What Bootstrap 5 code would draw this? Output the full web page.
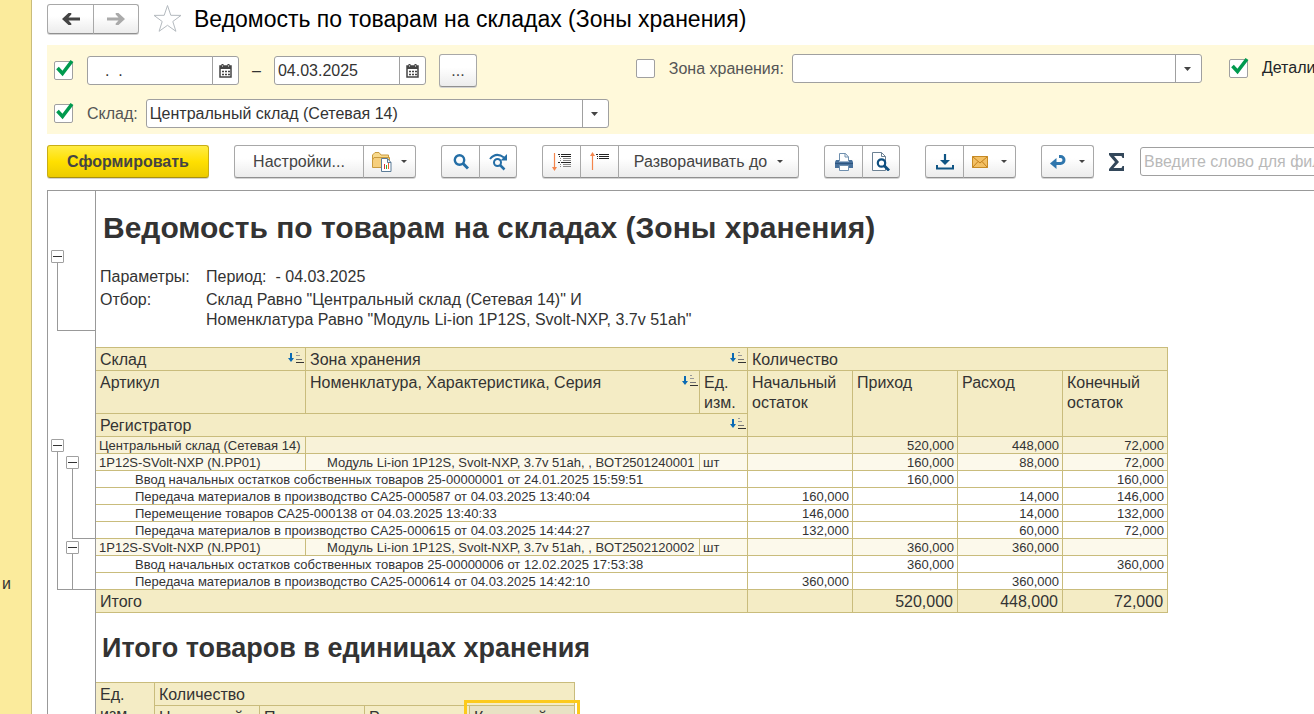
<!DOCTYPE html>
<html lang="ru">
<head>
<meta charset="utf-8">
<meta name="viewport" content="width=device-width, initial-scale=1">
<title>Ведомость по товарам на складах (Зоны хранения)</title>
<link href="https://cdn.jsdelivr.net/npm/bootstrap@5.3.0/dist/css/bootstrap.min.css" rel="stylesheet">
<style>
  :root { --rule: #c9bc7c; --head: #f4ecc5; --edge: #a0a0a0; }
  body { font-family: "Liberation Sans", Arial, sans-serif; font-size: 16px; line-height: 20px; color: #333; background: #fff; }
  .side-strip { width: 32px; background: #fbeb9c; border-right: 1px solid var(--rule); padding: 574px 0 0 2px; font-size: 16px; }
  .workspace { min-width: 0; padding-left: 15px; }
  .window-head { padding: 4px 0 7px; }
  .window-star { margin-left: 14px; }
  .window-title { font-size: 23px; line-height: 30px; color: #000; margin: 0 0 4px 12px; }

  .btn-tool { --bs-btn-padding-x: 0; --bs-btn-padding-y: 0; --bs-btn-font-size: 16px; --bs-btn-line-height: 20px; --bs-btn-border-radius: 3px;
    --bs-btn-color: #444; --bs-btn-border-color: #a8a8a8; --bs-btn-hover-border-color: #888;
    height: 33px; width: 39px; display: inline-flex; align-items: center; justify-content: center;
    background: linear-gradient(#fff 40%, #ececec); border-bottom-color: #909090; box-shadow: 0 1px 0 #d4d4d4; }
  .btn-end { width: 38px; }
  .btn-menu { width: 53px; gap: 9px; }
  .btn-wide { width: 130px; }
  .btn-expand { width: 181px; gap: 10px; }
  .btn-run { width: 162px; font-weight: 700; background: linear-gradient(#ffec45, #ffe000 50%, #eccb00); border-color: #c9ae14; border-bottom-color: #a89010; }
  .btn-history { width: 47px; height: 30px; }
  .btn-history:last-child { width: 46px; }
  .caret-mark { width: 0; border: 3px solid transparent; border-top-color: #444; border-bottom: 0; }

  .filter-panel { background: #fff9da; padding: 9px 0 6px 7px; gap: 27px; }
  .filter-panel label { color: #555; }
  .filter-line { gap: 14px; }
  .period { gap: 13px; }
  .labelled { gap: 8px; }
  .field { height: 29px; border: 1px solid var(--edge); border-radius: 3px; background-color: #fff; color: #333; font-size: 16px; line-height: 20px; padding: 0 3px; }
  .date-group input { width: 126px; border-radius: 3px 0 0 3px; }
  .date-group button { width: 27px; margin-left: -1px; padding: 0; border-radius: 0 3px 3px 0; display: flex; align-items: center; justify-content: center; }
  .combo { appearance: none; background-repeat: no-repeat; padding-right: 28px;
    background-image: url("data:image/svg+xml,%3Csvg xmlns='http://www.w3.org/2000/svg' width='26' height='27'%3E%3Cpath d='M.5 0v27' stroke='%23a0a0a0'/%3E%3Cpath d='M9 12h7l-3.500 4z' fill='%23444'/%3E%3C/svg%3E");
    background-position: right 0 top 0; }
  .combo-store { width: 463px; }
  .combo-zone { width: 410px; }
  .tick { appearance: none; position: relative; flex: none; width: 19px; height: 19px; margin: 0; border: 1px solid var(--edge); border-radius: 2px; background: #fff; }
  .tick:checked::before { content: ""; position: absolute; inset: -3px;
    background: url("data:image/svg+xml,%3Csvg xmlns='http://www.w3.org/2000/svg' viewBox='0 0 23 23'%3E%3Cpath d='M5.500 9l5 5.500L20 2' fill='none' stroke='%23009a4e' stroke-width='3.600'/%3E%3C/svg%3E"); }
  .search-field { width: 260px; }
  .search-field::placeholder { color: #b9b9b9; opacity: 1; }
  .tool-row { gap: 25px; padding: 11px 0 12px; }
  .sum-search { margin-left: -10px; }

  .report { border-top: 1px solid #999; border-left: 1px solid #999; }
  .gutter { width: 48px; flex: none; border-right: 1px solid #999; }
  .gutter-lead { height: 59px; }
  .gutter-gap { height: 108px; }
  .gutter-step { height: 2px; }
  .fold { display: block; width: 13px; height: 13px; padding: 0; border: 1px solid var(--edge); border-radius: 1px; background: linear-gradient(#333, #333) center / 9px 1px no-repeat #fff; }
  .fold-top { margin-left: 3px; }
  .fold-inner { margin-left: 8px; }
  .branch { border-left: 1px solid #999; border-bottom: 1px solid #999; margin-left: 9px; }
  .branch .branch { margin-left: 14px; }
  .branch .branch:last-child { border-bottom: 0; }
  .branch-head { height: 68px; }
  .branch-long { height: 70px; }
  .branch-short { height: 35px; }
  .report-title { font-size: 30px; line-height: 33px; font-weight: 700; margin: 0; padding: 20px 0 23px 7px; }
  .report-subtitle { font-size: 27px; line-height: 30px; font-weight: 700; margin: 0; padding: 20px 0 19px 6px; }
  .params { display: grid; grid-template-columns: 106px 1fr; row-gap: 3px; padding-left: 4px; margin: 0 0 17px; }
  .params dt, .params dd { margin: 0; font-weight: 400; }

  .ledger { border-collapse: separate; border-spacing: 0; table-layout: fixed; border-top: 1px solid var(--rule); }
  .ledger-main { width: 1072px; }
  .ledger-units { width: 479px; }
  .ledger th, .ledger td { border: solid var(--rule); border-width: 0 1px 1px 0; vertical-align: top; white-space: nowrap; }
  .ledger th { background: var(--head); font-weight: 400; padding: 2px 1px 0 4px; height: 23px; }
  .ledger th.two-line { height: 43px; white-space: normal; }
  .ledger td { font-size: 13px; line-height: 15px; padding: 1px 3px 0; height: 17px; }
  .ledger .num { text-align: right; }
  .ledger .group td { background: #f8f2d8; }
  .ledger .item td { background: #fcf9eb; }
  .ledger .doc { padding-left: 39px; }
  .ledger .goods { padding-left: 21px; }
  .ledger .total td { background: var(--head); font-size: 16px; line-height: 20px; padding: 2px 4px 0; height: 23px; }
  .sort-mark { float: right; margin-top: 2px; }
  .ledger th.picked { position: relative; background: #e8e2c4; }
  .picked::after { content: ""; position: absolute; inset: -6px; border: 3px solid #fcca1c; }
</style>
</head>
<body class="vh-100 overflow-hidden">
<svg class="d-none">
  <symbol id="sort" viewBox="0 0 16 12"><path d="M2 1h2v5h2L3 10 0 6h2z" fill="#0a6ab4"/><path d="M8 .5h2M8 3.500h4" stroke="#999"/><path d="M8 7.500h6" stroke="#777"/><path d="M8 10.500h8" stroke="#333"/></symbol>
  <symbol id="calendar" viewBox="0 0 13 14"><path d="M1 2h11v11H1z" fill="none" stroke="#444" stroke-width="1.500"/><path d="M1 2h11v3H1z" fill="#444"/><path d="M3.500 0v4M9.500 0v4" stroke="#444" stroke-width="2"/><path d="M3.500 1v2M9.500 1v2" stroke="#ccc" stroke-width=".7"/><path d="M3 7.500h2m1 0h2m1 0h2M3 10.500h2m1 0h2m1 0h2" stroke="#444" stroke-width="1.700"/></symbol>
</svg>
<div class="d-flex h-100">
  <aside class="side-strip flex-shrink-0">и</aside>
  <main class="workspace flex-grow-1 overflow-hidden d-flex flex-column">

    <header class="window-head d-flex align-items-start">
      <div class="btn-group">
        <button type="button" class="btn btn-tool btn-history" aria-label="Назад"><svg width="18" height="12" viewBox="0 0 18 12"><path d="M0 6 6.500 0h2.800v1.500L6.500 4.600H18v2.900H6.500l2.800 3V12H6.500z" fill="#444"/></svg></button>
        <button type="button" class="btn btn-tool btn-history" aria-label="Вперёд"><svg width="18" height="12" viewBox="0 0 18 12"><path d="M18 6 11.500 0H8.700v1.500l2.800 3.100H0v2.900h11.500l-2.800 3V12h2.800z" fill="#aaa"/></svg></button>
      </div>
      <svg class="window-star flex-shrink-0" width="29" height="29" viewBox="0 0 29 29"><path d="m14.500 1.500 3.300 9.800 10.200.1-8.200 6.100 3.100 9.800-8.400-6-8.400 6 3.100-9.800L1 11.400l10.200-.1z" fill="none" stroke="#b4babf"/></svg>
      <h1 class="window-title text-nowrap">Ведомость по товарам на складах (Зоны хранения)</h1>
    </header>

    <form class="filter-panel d-flex align-items-start flex-shrink-0">
      <div class="flex-shrink-0">
        <div class="filter-line d-flex align-items-center">
          <input class="tick" type="checkbox" checked aria-label="Период">
          <div class="period d-flex align-items-center">
            <div class="date-group d-flex">
              <input class="field ps-2" type="text" value="  .  ." aria-label="Начало периода">
              <button type="button" class="field" aria-label="Выбрать дату начала"><svg width="13" height="14"><use href="#calendar"/></svg></button>
            </div>
            <span>–</span>
            <div class="date-group d-flex">
              <input class="field" type="text" value="04.03.2025" aria-label="Конец периода">
              <button type="button" class="field" aria-label="Выбрать дату конца"><svg width="13" height="14"><use href="#calendar"/></svg></button>
            </div>
            <button type="button" class="btn btn-tool btn-end">...</button>
          </div>
        </div>
        <div class="filter-line d-flex align-items-center mt-2 pt-1">
          <input class="tick" type="checkbox" checked aria-label="Отбор по складу">
          <div class="labelled d-flex align-items-center">
            <label for="store">Склад:</label>
            <select class="field combo combo-store" id="store"><option>Центральный склад (Сетевая 14)</option></select>
          </div>
        </div>
      </div>
      <div class="filter-line d-flex align-items-center flex-shrink-0">
        <input class="tick" type="checkbox" aria-label="Отбор по зоне хранения">
        <div class="labelled d-flex align-items-center">
          <label for="zone">Зона хранения:</label>
          <select class="field combo combo-zone" id="zone"><option></option></select>
        </div>
      </div>
      <div class="filter-line d-flex align-items-center flex-shrink-0 pt-1">
        <input class="tick" type="checkbox" id="details" checked>
        <label class="text-body" for="details">Детализация</label>
      </div>
    </form>

    <div class="tool-row d-flex align-items-center flex-shrink-0" role="toolbar">
      <button type="button" class="btn btn-tool btn-run flex-shrink-0">Сформировать</button>
      <div class="btn-group flex-shrink-0">
        <button type="button" class="btn btn-tool btn-wide">Настройки...</button>
        <button type="button" class="btn btn-tool btn-menu" aria-label="Варианты отчёта"><svg width="20" height="20" viewBox="0 0 20 20"><path d="M.5 14.500V3L3 .5h4L9 3h7.500v3" fill="#f8d98b" stroke="#c99a3e"/><path d="M.5 15.500V8L2 5.500h15.500v3L9 15.500z" fill="#f6cf7d" stroke="#c99a3e"/><path d="M9.500 6.500h6l3.500 4v9H9.500z" fill="#fff" stroke="#5c7c98"/><path d="M15.500 7v3.500H19" fill="none" stroke="#5c7c98"/><path d="M12.500 17v-5" stroke="#d33"/><path d="M14.500 17v-4" stroke="#3a3"/><path d="M16.500 17v-6" stroke="#e63"/></svg><span class="caret-mark"></span></button>
      </div>
      <div class="btn-group flex-shrink-0">
        <button type="button" class="btn btn-tool" aria-label="Найти"><svg width="16" height="16" viewBox="0 0 16 16"><circle cx="6.500" cy="6" r="4.700" fill="none" stroke="#246ea6" stroke-width="2.400"/><path d="m10 9.500 5 5" stroke="#246ea6" stroke-width="3"/></svg></button>
        <button type="button" class="btn btn-tool btn-end" aria-label="Найти далее"><svg width="19" height="18" viewBox="0 0 19 18"><path d="M1 6Q7-1.500 15 4.500" fill="none" stroke="#246ea6" stroke-width="2"/><path d="M18 1v6.500h-6.500z" fill="#246ea6"/><circle cx="8.500" cy="9.500" r="3.500" fill="none" stroke="#246ea6" stroke-width="2"/><path d="m11 12 4.500 4.500" stroke="#246ea6" stroke-width="2.500"/></svg></button>
      </div>
      <div class="btn-group flex-shrink-0">
        <button type="button" class="btn btn-tool" aria-label="Развернуть группы"><svg width="19" height="19" viewBox="0 0 19 19"><path d="M2.500 1v15" stroke="#f4854c" stroke-width="1.200"/><path d="M0 15h5l-2.500 4z" fill="#f4854c"/><path d="M6 2.500h2m1 0h10M7 4.500h1m1 0h10M6 10.500h2m1 0h10" stroke="#222"/><path d="M8 6.500h1m2 0h8M8 8.500h1m2 0h8M8 12.500h1m2 0h8M8 14.500h1m2 0h8" stroke="#888"/></svg></button>
        <button type="button" class="btn btn-tool" aria-label="Свернуть группы"><svg width="19" height="19" viewBox="0 0 19 19"><path d="M2.500 18V3" stroke="#f4854c" stroke-width="1.200"/><path d="M0 4h5L2.500 0z" fill="#f4854c"/><path d="M6 2.500h2m1 0h10M7 4.500h1m1 0h10M7 6.500h1m1 0h10" stroke="#222"/></svg></button>
        <button type="button" class="btn btn-tool btn-expand">Разворачивать до<span class="caret-mark"></span></button>
      </div>
      <div class="btn-group flex-shrink-0">
        <button type="button" class="btn btn-tool" aria-label="Печать"><svg width="18" height="18" viewBox="0 0 18 18"><path d="M4.500 8V.5h6L13.500 4v4" fill="#fff" stroke="#6f8fae"/><path d="M10 .5V4h3.500" fill="none" stroke="#6f8fae"/><path d="M1 7h3v1.500h10V7h3l1 2v6H0V9z" fill="#48719c"/><path d="M0 10.500h18" stroke="#2e5580"/><path d="M4.500 12.500h9v5h-9z" fill="#fff" stroke="#6f8fae"/></svg></button>
        <button type="button" class="btn btn-tool btn-end" aria-label="Предварительный просмотр"><svg width="18" height="19" viewBox="0 0 18 19"><path d="M.5.5h9l4 4v14H.5z" fill="#fff" stroke="#6c8193"/><path d="M9.500.5v4h4" fill="none" stroke="#6c8193"/><circle cx="9.500" cy="11" r="3.700" fill="#fff" stroke="#0f4f80" stroke-width="2.200"/><path d="m12 13.500 5 5" stroke="#0f4f80" stroke-width="2.800"/></svg></button>
      </div>
      <div class="btn-group flex-shrink-0">
        <button type="button" class="btn btn-tool" aria-label="Сохранить"><svg width="18" height="16" viewBox="0 0 18 16"><path d="M9 0v8" stroke="#0f5484" stroke-width="2.200"/><path d="M4 6h10l-5 5z" fill="#0f5484"/><path d="M1 11v3.500h16V11" fill="none" stroke="#0f5484" stroke-width="2"/></svg></button>
        <button type="button" class="btn btn-tool btn-menu" aria-label="Отправить"><svg width="16" height="12" viewBox="0 0 16 12"><path d="M.5.5h15v11H.5z" fill="#f3c064" stroke="#c68a24"/><path d="m.5.500 7.500 6.500L15.500.5M.5 11.500 6 5.500m9.500 6L10 5.500" fill="none" stroke="#c07f1c"/></svg><span class="caret-mark ms-1"></span></button>
      </div>
      <button type="button" class="btn btn-tool btn-menu flex-shrink-0" aria-label="Отменить"><svg width="16" height="14" viewBox="0 0 16 14"><path d="M9 1.500h1.500a3.500 3.500 0 0 1 0 7H5" fill="none" stroke="#2f76ad" stroke-width="3"/><path d="M0 8.500 6.500 3v11z" fill="#2f76ad"/></svg><span class="caret-mark ms-1"></span></button>
      <div class="d-flex align-items-center flex-shrink-0 sum-search">
        <svg width="15" height="18" viewBox="0 0 15 18"><path d="M0 0h15v5h-1.500L12.500 3H5l5 6-5.500 6h8l1-2H15v5H0v-2l6-7L0 2z" fill="#33475a"/></svg>
        <input class="field search-field ms-3" type="search" placeholder="Введите слово для фильтра" aria-label="Фильтр">
      </div>
    </div>

    <section class="report d-flex flex-grow-1">
      <div class="gutter">
        <div class="gutter-lead"></div>
        <button type="button" class="fold fold-top" aria-label="Свернуть шапку"></button>
        <div class="branch branch-head"></div>
        <div class="gutter-gap"></div>
        <button type="button" class="fold fold-top" aria-label="Свернуть склад"></button>
        <div class="branch pt-1">
          <button type="button" class="fold fold-inner" aria-label="Свернуть товар"></button>
          <div class="branch branch-long"></div>
          <div class="gutter-step"></div>
          <button type="button" class="fold fold-inner" aria-label="Свернуть товар"></button>
          <div class="branch branch-short"></div>
        </div>
      </div>
      <div class="sheet flex-shrink-0">
        <h2 class="report-title">Ведомость по товарам на складах (Зоны хранения)</h2>
        <dl class="params">
          <dt>Параметры:</dt><dd>Период:&nbsp; - 04.03.2025</dd>
          <dt>Отбор:</dt><dd>Склад Равно "Центральный склад (Сетевая 14)" И<br>Номенклатура Равно "Модуль Li-ion 1P12S, Svolt-NXP, 3.7v 51ah"</dd>
        </dl>
        <table class="ledger ledger-main">
          <colgroup><col width="210"><col width="394"><col width="48"><col width="105"><col width="105"><col width="105"><col width="105"></colgroup>
          <thead>
            <tr><th>Склад<svg class="sort-mark" width="16" height="12"><use href="#sort"/></svg></th><th colspan="2">Зона хранения<svg class="sort-mark" width="16" height="12"><use href="#sort"/></svg></th><th colspan="4">Количество</th></tr>
            <tr><th class="two-line">Артикул</th><th>Номенклатура, Характеристика, Серия<svg class="sort-mark" width="16" height="12"><use href="#sort"/></svg></th><th class="two-line">Ед. изм.</th><th rowspan="2" class="two-line">Начальный остаток</th><th rowspan="2">Приход</th><th rowspan="2">Расход</th><th rowspan="2" class="two-line">Конечный остаток</th></tr>
            <tr><th colspan="3">Регистратор<svg class="sort-mark" width="16" height="12"><use href="#sort"/></svg></th></tr>
          </thead>
          <tbody>
            <tr class="group"><td>Центральный склад (Сетевая 14)</td><td colspan="2"></td><td></td><td class="num">520,000</td><td class="num">448,000</td><td class="num">72,000</td></tr>
            <tr class="item"><td>1P12S-SVolt-NXP (N.PP01)</td><td class="goods">Модуль Li-ion 1P12S, Svolt-NXP, 3.7v 51ah, , BOT2501240001</td><td>шт</td><td></td><td class="num">160,000</td><td class="num">88,000</td><td class="num">72,000</td></tr>
            <tr><td colspan="3" class="doc">Ввод начальных остатков собственных товаров 25-00000001 от 24.01.2025 15:59:51</td><td></td><td class="num">160,000</td><td></td><td class="num">160,000</td></tr>
            <tr><td colspan="3" class="doc">Передача материалов в производство СА25-000587 от 04.03.2025 13:40:04</td><td class="num">160,000</td><td></td><td class="num">14,000</td><td class="num">146,000</td></tr>
            <tr><td colspan="3" class="doc">Перемещение товаров СА25-000138 от 04.03.2025 13:40:33</td><td class="num">146,000</td><td></td><td class="num">14,000</td><td class="num">132,000</td></tr>
            <tr><td colspan="3" class="doc">Передача материалов в производство СА25-000615 от 04.03.2025 14:44:27</td><td class="num">132,000</td><td></td><td class="num">60,000</td><td class="num">72,000</td></tr>
            <tr class="item"><td>1P12S-SVolt-NXP (N.PP01)</td><td class="goods">Модуль Li-ion 1P12S, Svolt-NXP, 3.7v 51ah, , BOT2502120002</td><td>шт</td><td></td><td class="num">360,000</td><td class="num">360,000</td><td></td></tr>
            <tr><td colspan="3" class="doc">Ввод начальных остатков собственных товаров 25-00000006 от 12.02.2025 17:53:38</td><td></td><td class="num">360,000</td><td></td><td class="num">360,000</td></tr>
            <tr><td colspan="3" class="doc">Передача материалов в производство СА25-000614 от 04.03.2025 14:42:10</td><td class="num">360,000</td><td></td><td class="num">360,000</td><td></td></tr>
          </tbody>
          <tfoot>
            <tr class="total"><td colspan="3">Итого</td><td></td><td class="num">520,000</td><td class="num">448,000</td><td class="num">72,000</td></tr>
          </tfoot>
        </table>
        <h2 class="report-subtitle">Итого товаров в единицах хранения</h2>
        <table class="ledger ledger-units">
          <colgroup><col width="59"><col width="105"><col width="105"><col width="105"><col width="105"></colgroup>
          <thead>
            <tr><th rowspan="2" class="two-line">Ед. изм.</th><th colspan="4">Количество</th></tr>
            <tr><th class="two-line">Начальный остаток</th><th>Приход</th><th>Расход</th><th class="two-line picked">Конечный остаток</th></tr>
          </thead>
        </table>
      </div>
    </section>
  </main>
</div>
<script src="https://cdn.jsdelivr.net/npm/bootstrap@5.3.0/dist/js/bootstrap.bundle.min.js"></script>
</body>
</html>
